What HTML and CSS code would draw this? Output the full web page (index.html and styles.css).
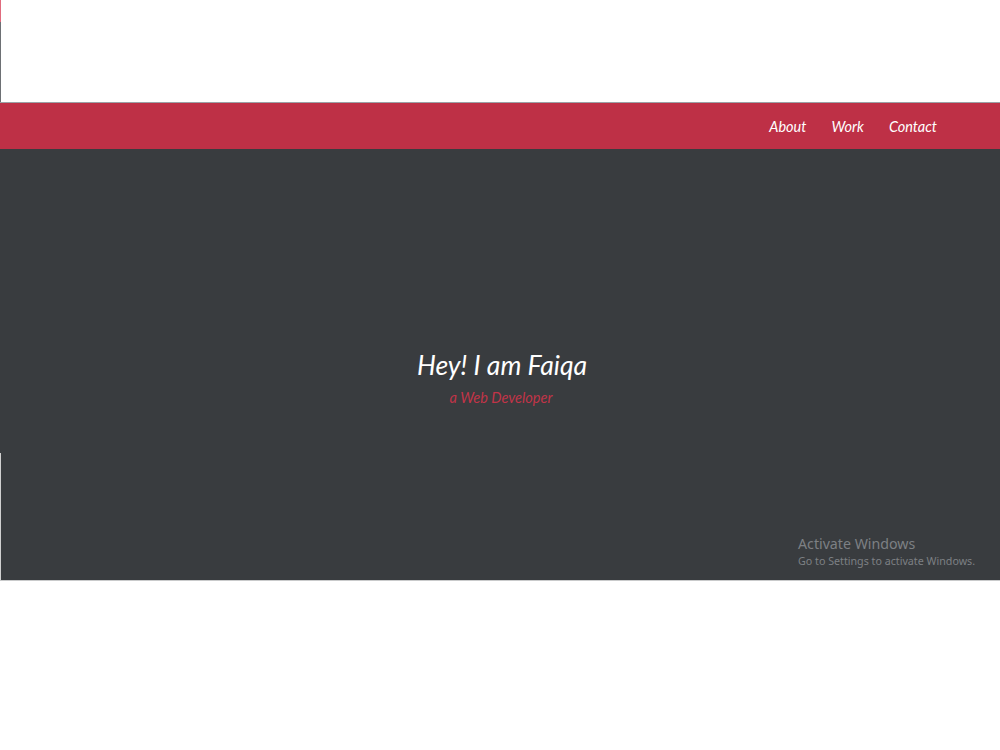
FILE: index.html
```html
<!DOCTYPE html>
<html>
<head>
<meta charset="utf-8">
<link rel="stylesheet" href="styles.css">
</head>
<body>
<div class="edge edge-red"></div>
<div class="edge edge-gray"></div>
<div class="edge edge-light"></div>
<div class="top-space"></div>
<nav class="nav">
  <a href="#">About</a>
  <a href="#">Work</a>
  <a href="#">Contact</a>
</nav>
<section class="hero">
  <h1 class="hero-title">Hey! I am Faiqa</h1>
  <p class="hero-sub">a Web Developer</p>
  <div class="watermark">
    <div class="wm-title">Activate Windows</div>
    <div class="wm-sub">Go to Settings to activate Windows.</div>
  </div>
</section>
</body>
</html>
```
FILE: styles.css
```css
html, body {
  margin: 0;
  padding: 0;
  background: #ffffff;
}
body {
  font-family: Lato, "Liberation Sans", sans-serif;
  position: relative;
  height: 750px;
  overflow: hidden;
}
.top-space {
  height: 102px;
}
.nav {
  border-top: 1px solid #9ba1a5;
  height: 47px;
  background: #be3046;
  display: flex;
  justify-content: flex-end;
  align-items: center;
  gap: 25px;
  padding-right: 63px;
  box-sizing: border-box;
}
.nav a {
  color: #ffffff;
  text-decoration: none;
  font-style: italic;
  font-size: 14.5px;
}
.hero {
  position: relative;
  height: 432px;
  background: #393c3f;
  border-bottom: 1px solid #c9cacb;
  display: flex;
  flex-direction: column;
  align-items: center;
  justify-content: center;
  padding-top: 26px;
  box-sizing: border-box;
}
.hero-title {
  margin: 0;
  color: #ffffff;
  font-style: italic;
  font-weight: 400;
  font-size: 26.6px;
  line-height: 32px;
  padding-left: 4px;
}
.hero-sub {
  margin: 8px 0 0;
  color: #c13448;
  font-style: italic;
  font-size: 14.5px;
  line-height: 18px;
  padding-left: 2px;
}
.watermark {
  position: absolute;
  left: 798px;
  top: 386px;
  font-family: "Noto Sans", "Open Sans", sans-serif;
  color: #7d8084;
}
.wm-title {
  font-size: 14.2px;
  line-height: 18px;
}
.wm-sub {
  font-size: 10.7px;
  line-height: 16px;
}
.edge {
  position: absolute;
  left: 0;
  width: 1px;
  z-index: 2;
}
.edge-red {
  top: 0;
  height: 22px;
  background: #e06b7d;
}
.edge-gray {
  top: 22px;
  height: 80px;
  background: #6d7074;
}
.edge-light {
  top: 453px;
  height: 127px;
  background: #d0d0d0;
}
```
